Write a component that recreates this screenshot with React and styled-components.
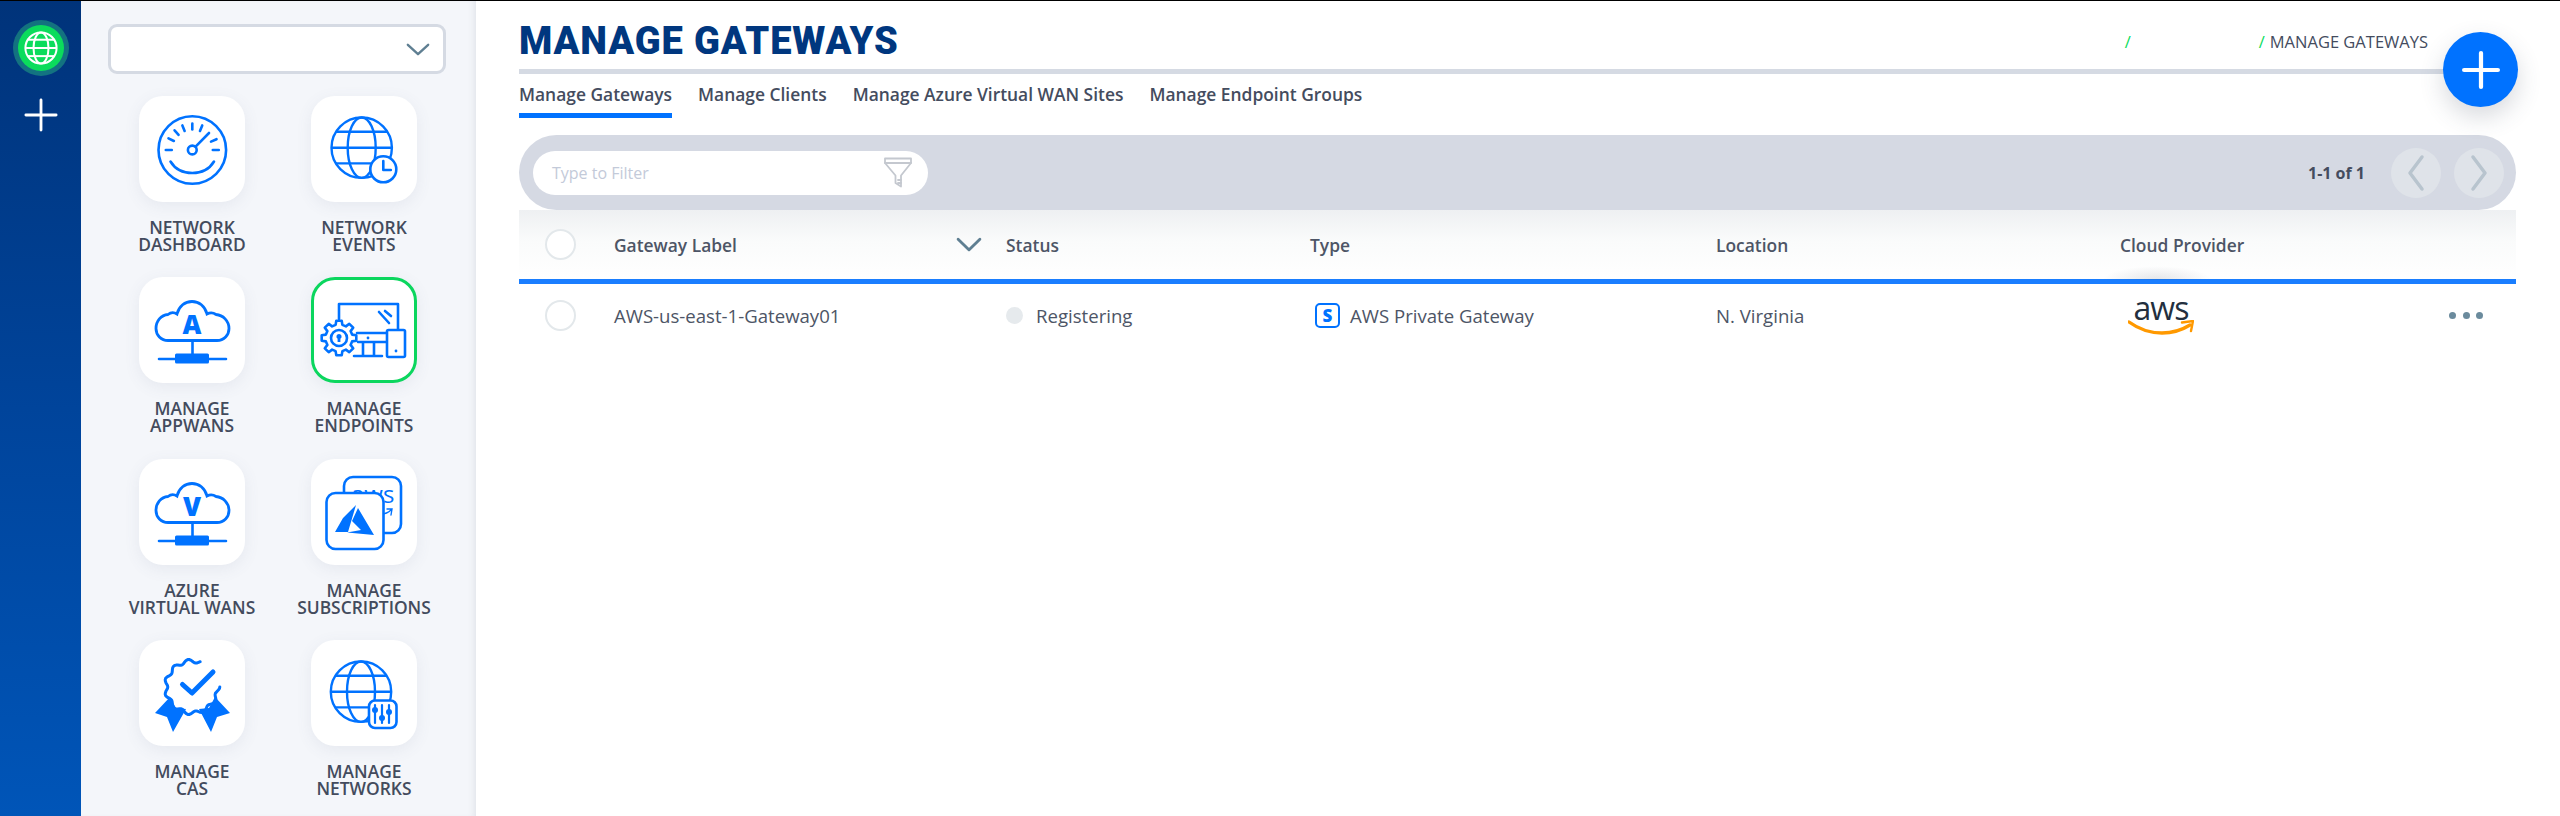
import React from "react";
import styled, { createGlobalStyle } from "styled-components";

const BLUE = "#0072ff";

const GlobalStyle = createGlobalStyle`
  html, body {
    margin: 0;
    padding: 0;
    height: 100%;
    background: #fff;
    overflow: hidden;
  }
  * {
    box-sizing: border-box;
  }
`;

const Page = styled.div`
  position: relative;
  display: flex;
  width: 2560px;
  height: 816px;
  border-top: 1px solid #000;
  font-family: "Open Sans", "Noto Sans", sans-serif;
  color: #444c5e;
`;

const Rail = styled.aside`
  flex: 0 0 81px;
  display: flex;
  flex-direction: column;
  align-items: center;
  padding-top: 19px;
  background: linear-gradient(180deg, #00337a 0%, #00449b 50%, #0055b8 100%);
`;

const RailGlobe = styled.div`
  width: 46px;
  height: 46px;
  margin: 5px 0 27px;
  border-radius: 50%;
  background: #0bdc5c;
  box-shadow: 0 0 0 5px rgba(46, 200, 130, 0.42);
  display: flex;
  align-items: center;
  justify-content: center;
`;

const Panel = styled.nav`
  flex: 0 0 395px;
  min-width: 0;
  padding: 23px 0 0 27px;
  background: #f4f6fa;
  box-shadow: inset -6px 0 8px -6px rgba(60, 70, 90, 0.14);
`;

const NetworkSelect = styled.div`
  width: 338px;
  height: 50px;
  border: 3px solid #d5dae3;
  border-radius: 9px;
  background: #fff;
  display: flex;
  align-items: center;
  justify-content: flex-end;
  padding-right: 13px;
`;

const TileGrid = styled.div`
  display: grid;
  grid-template-columns: 172px 172px;
  grid-auto-rows: 181.3px;
  margin: 22px 0 0 -2px;
`;

const TileItem = styled.div`
  display: flex;
  flex-direction: column;
  align-items: center;
`;

const TileBox = styled.div`
  width: 106px;
  height: 106px;
  border-radius: 24px;
  background: #fff;
  border: ${(p) => (p.$active ? "3px solid #0bd65e" : "none")};
  box-shadow: 0 4px 16px rgba(90, 100, 130, 0.09);
  display: flex;
  align-items: center;
  justify-content: center;
  flex: none;
`;

const TileLabel = styled.div`
  margin-top: 17px;
  font-size: 17.4px;
  font-weight: 600;
  line-height: 17px;
  text-align: center;
  white-space: pre-line;
  color: #434b5d;
`;

const Main = styled.main`
  flex: 1;
  min-width: 0;
  padding: 0 44px 0 43px;
`;

const TitleRow = styled.header`
  display: flex;
  align-items: flex-start;
  justify-content: space-between;
  border-bottom: 5px solid #d5dae3;
  height: 73px;
`;

const Title = styled.h1`
  margin: 20px 0 0;
  font-family: Roboto, "Liberation Sans", sans-serif;
  font-size: 38px;
  line-height: 40px;
  font-weight: 900;
  letter-spacing: 0.9px;
  color: #00377f;
`;

const Breadcrumbs = styled.div`
  display: flex;
  align-items: center;
  margin: 31px 88px 0 0;
  font-size: 16.5px;
  line-height: 20px;
  font-weight: 500;
  white-space: nowrap;
  color: #444c5e;
`;

const Slash = styled.span`
  color: #0bdc5c;
  font-weight: 400;
  margin-right: ${(p) => p.$gap}px;
`;

const Tabs = styled.div`
  display: flex;
  gap: 26px;
  height: 44px;
`;

const Tab = styled.div`
  height: 44px;
  padding-top: 9px;
  font-size: 17.4px;
  line-height: 22px;
  font-weight: 600;
  white-space: nowrap;
  color: #444c5e;
  border-bottom: 5px solid ${(p) => (p.$active ? BLUE : "transparent")};
`;

const FilterBar = styled.div`
  height: 75px;
  margin-top: 17px;
  padding: 0 12px 0 14px;
  border-radius: 38px;
  background: #d5d9e3;
  display: flex;
  align-items: center;
`;

const FilterInput = styled.div`
  width: 395px;
  height: 44px;
  padding: 0 15px 0 19px;
  border-radius: 22px;
  background: #fff;
  display: flex;
  align-items: center;
  justify-content: space-between;
  font-size: 16px;
  font-weight: 400;
  color: #c3cad9;
`;

const PageCount = styled.div`
  margin-left: auto;
  margin-right: 26px;
  font-size: 16px;
  font-weight: 700;
  color: #444c5e;
`;

const PageButton = styled.div`
  width: 50px;
  height: 50px;
  margin-left: ${(p) => p.$gap || 0}px;
  border-radius: 50%;
  background: #dfe3e9;
  display: flex;
  align-items: center;
  justify-content: center;
`;

const gridColumns = "95px 392px 304px 406px 404px 270px 1fr";

const HeadRow = styled.div`
  display: grid;
  grid-template-columns: ${gridColumns};
  align-items: center;
  height: 74px;
  border-bottom: 5px solid #1a7eff;
  background: linear-gradient(180deg, #eef0f2 0%, #fafbfb 45%, #fff 100%);
  font-size: 17.4px;
  font-weight: 600;
  color: #4d5566;
`;

const BodyRow = styled.div`
  display: grid;
  grid-template-columns: ${gridColumns};
  align-items: center;
  height: 63px;
  font-size: 18.6px;
  font-weight: 400;
  color: #4d5566;
`;

const RowCheck = styled.div`
  width: 31px;
  height: 31px;
  margin-left: 26px;
  border-radius: 50%;
  border: 2px solid #e3e8eb;
  background: #fff;
`;

const HeadLabel = styled.div`
  display: flex;
  align-items: center;
  justify-content: space-between;
  padding-right: 24px;
`;

const ProviderHead = styled.div`
  position: relative;
  white-space: nowrap;
  &::after {
    content: "";
    position: absolute;
    left: -18px;
    top: 33px;
    width: 110px;
    height: 14px;
    background: radial-gradient(ellipse at 50% 100%, rgba(60, 70, 90, 0.14), transparent 70%);
  }
`;

const StatusCell = styled.div`
  display: flex;
  align-items: center;
  gap: 13px;
`;

const StatusDot = styled.span`
  width: 17px;
  height: 17px;
  border-radius: 50%;
  background: #e6eaed;
`;

const TypeCell = styled.div`
  display: flex;
  align-items: center;
  gap: 10px;
  margin-left: 5px;
`;

const TypeBadge = styled.span`
  width: 25px;
  height: 25px;
  border: 2px solid ${BLUE};
  border-radius: 5px;
  display: flex;
  align-items: center;
  justify-content: center;
  font-size: 17px;
  line-height: 1;
  font-weight: 800;
  color: ${BLUE};
`;

const ProviderCell = styled.div`
  margin-left: 7px;
  display: flex;
  flex-direction: column;
  align-items: center;
  width: 68px;
`;

const AwsWord = styled.span`
  font-size: 32px;
  line-height: 24px;
  height: 24px;
  font-weight: 500;
  letter-spacing: -1px;
  color: #232f3e;
`;

const MoreDots = styled.div`
  display: flex;
  justify-content: flex-end;
  gap: 6.5px;
  padding-right: 33px;
`;

const MoreDot = styled.span`
  width: 7px;
  height: 7px;
  border-radius: 50%;
  background: #6b8b9d;
`;

const Fab = styled.div`
  position: absolute;
  top: 31px;
  right: 42px;
  width: 75px;
  height: 75px;
  border-radius: 50%;
  background: ${BLUE};
  box-shadow: 0 10px 24px rgba(60, 70, 90, 0.2);
  display: flex;
  align-items: center;
  justify-content: center;
`;

const Plus = ({ size, width }) => (
  <svg width={size} height={size} viewBox="0 0 36 36" fill="none" stroke="#fff" strokeWidth={width} strokeLinecap="round">
    <path d="M18 2v32M2 18h32" />
  </svg>
);

const Chevron = ({ color, width, height, stroke }) => (
  <svg width={width} height={height} viewBox="0 0 26 14" fill="none" stroke={color} strokeWidth={stroke} strokeLinecap="round" strokeLinejoin="round" preserveAspectRatio="none">
    <path d="M2 2l11 10L24 2" />
  </svg>
);

const PageArrow = ({ left }) => (
  <svg width="18" height="38" viewBox="0 0 18 38" fill="none" stroke="#b8c4ce" strokeWidth="3.5" strokeLinecap="round" strokeLinejoin="round">
    <path d={left ? "M15 3L3 19l12 16" : "M3 3l12 16L3 35"} />
  </svg>
);

// globe drawn in tile coordinates, latitude lines stop at the circle
const GlobeLines = ({ cx, cy, r, sw = 2.4, rx }) => {
  const offs = [-0.53, 0, 0.52];
  const ell = rx || r * 0.45;
  return (
    <g fill="none" stroke="currentColor" strokeWidth={sw}>
      <circle cx={cx} cy={cy} r={r} />
      <ellipse cx={cx} cy={cy} rx={ell} ry={r} />
      {offs.map((o) => {
        const y = cy + o * r;
        const half = Math.sqrt(1 - o * o) * r;
        return <path key={o} d={`M${cx - half} ${y}H${cx + half}`} />;
      })}
    </g>
  );
};

const Ico = styled.svg.attrs({ viewBox: "0 0 106 106", width: 106, height: 106 })`
  color: ${BLUE};
  flex: none;
  margin: ${(p) => (p.$inset ? "-3px" : "0")};
`;

const DashboardIcon = () => {
  const cx = 53.3;
  const cy = 54;
  const angles = [180, 206, 228, 248, 270, 292, 336, 360];
  return (
    <Ico>
      <g fill="none" stroke="currentColor" strokeWidth="2.6" strokeLinecap="round">
        <circle cx={cx} cy={cy} r="33.8" />
        {angles.map((a) => {
          const t = (a * Math.PI) / 180;
          return (
            <path
              key={a}
              d={`M${cx + 20.5 * Math.cos(t)} ${cy + 20.5 * Math.sin(t)}L${cx + 26.5 * Math.cos(t)} ${cy + 26.5 * Math.sin(t)}`}
            />
          );
        })}
        <circle cx={cx} cy={cy} r="4.4" />
        <path d="M56.6 50.7L70 37" />
        <path d="M31.5 65.5C36 73 44 77 53.3 77C62.5 77 70.5 73 75 65.5" />
      </g>
    </Ico>
  );
};

const EventsIcon = () => (
  <Ico>
    <GlobeLines cx={50.7} cy={51.7} r={30.2} rx={14} />
    <circle cx="72.3" cy="73.3" r="13" fill="#fff" stroke="currentColor" strokeWidth="2.6" />
    <path d="M72.3 65v9h7.5" fill="none" stroke="currentColor" strokeWidth="2.6" strokeLinecap="round" strokeLinejoin="round" />
  </Ico>
);

const CloudLetter = styled.text`
  font-family: "Open Sans", sans-serif;
  font-weight: 800;
  font-size: 26px;
  fill: currentColor;
  text-anchor: middle;
`;

const CloudIcon = ({ letter }) => (
  <Ico>
    <path
      d="M29 63.5H78C85 63.5 90 58 90 51.5C90 44 84 38 77 37.5C74 35.5 71 35.5 68 37C66 29 60 24.5 53 24.5C46 24.5 40 29 38 37C35 35 32 35 29 37.5C22 38 17 44 17 51.5C17 58 22 63.5 29 63.5Z"
      fill="none"
      stroke="currentColor"
      strokeWidth="2.8"
    />
    <path d="M53.5 64V77M20 82H87" fill="none" stroke="currentColor" strokeWidth="2.6" strokeLinecap="round" />
    <rect x="36" y="76.5" width="34" height="10" rx="1.5" fill="currentColor" />
    <CloudLetter x="53" y="57">{letter}</CloudLetter>
  </Ico>
);

const gearPath = (cx, cy, ro, ri, teeth) => {
  const pts = [];
  const step = (Math.PI * 2) / teeth;
  for (let i = 0; i < teeth; i++) {
    const a = i * step - Math.PI / 2;
    const w = step * 0.2;
    [
      [ri, a - step * 0.32],
      [ro, a - w],
      [ro, a + w],
      [ri, a + step * 0.32],
    ].forEach(([r, t]) => pts.push(`${(cx + r * Math.cos(t)).toFixed(1)} ${(cy + r * Math.sin(t)).toFixed(1)}`));
  }
  return `M${pts.join("L")}Z`;
};

const EndpointsIcon = () => (
  <Ico $inset>
    <g fill="none" stroke="currentColor" strokeWidth="2.6" strokeLinejoin="round" strokeLinecap="round">
      <path d="M28 42V27H87V53" />
      <path d="M68 35L78 46M74 34L80 39" />
      <path d="M47 65H76M46 56H76" />
      <path d="M52 66V79M63 66V79M43 79H71" />
      <rect x="76" y="53" width="18" height="27" rx="1.5" fill="#fff" />
      <path d={gearPath(28, 61, 17.5, 13.5, 8)} fill="#fff" />
      <circle cx="28" cy="61" r="8" />
    </g>
    <circle cx="57" cy="61" r="1.4" fill="currentColor" />
    <circle cx="85" cy="74" r="1.4" fill="currentColor" />
    <path d="M28 57a2.6 2.6 0 0 1 1.4 4.8V65h-2.8v-3.2A2.6 2.6 0 0 1 28 57Z" fill="currentColor" />
  </Ico>
);

const FaintAws = styled.text`
  font-family: "Open Sans", sans-serif;
  font-size: 24px;
  font-weight: 400;
  fill: currentColor;
`;

const SubscriptionsIcon = () => (
  <Ico>
    <rect x="33" y="18" width="57" height="56" rx="9" fill="none" stroke="currentColor" strokeWidth="2.6" />
    <FaintAws x="40" y="44">aws</FaintAws>
    <path d="M70 55c4 0 7-1 10-4M76 50l5 0-1 6" fill="none" stroke="currentColor" strokeWidth="1.4" strokeLinecap="round" />
    <rect x="15.5" y="34" width="57" height="56" rx="9" fill="#fff" stroke="currentColor" strokeWidth="2.6" />
    <path d="M45 46L32 59L24 73H37ZM47 49L41 62L50 71L36 73.5L63 76Z" fill="currentColor" />
  </Ico>
);

const rosette = (cx, cy, from, to) => {
  const pts = [];
  for (let d = from; d <= to; d += 3) {
    const t = (d * Math.PI) / 180;
    const r = 26 + 1.8 * Math.cos(t * 11);
    pts.push(`${(cx + r * Math.cos(t)).toFixed(1)} ${(cy + r * Math.sin(t)).toFixed(1)}`);
  }
  return `M${pts.join("L")}`;
};

const CasIcon = () => (
  <Ico>
    <path d={rosette(53, 47, 0, 290)} fill="none" stroke="currentColor" strokeWidth="3" strokeLinecap="round" strokeLinejoin="round" />
    <path d="M16 73L31 57L37 68L47 69L34 92L28 77Z" fill="currentColor" />
    <path d="M91 73L76 57L70 68L60 69L72 92L78 77Z" fill="currentColor" />
    <path d="M43.5 44.5L53 53L74 32" fill="none" stroke="currentColor" strokeWidth="5" strokeLinecap="round" strokeLinejoin="round" />
  </Ico>
);

const NetworksIcon = () => (
  <Ico>
    <GlobeLines cx={50} cy={51.7} r={30.2} rx={14} />
    <rect x="58" y="60.5" width="27.5" height="27.5" rx="6" fill="#fff" stroke="currentColor" strokeWidth="2.6" />
    <path d="M64 65V83M71 65V83M78 65V83" fill="none" stroke="currentColor" strokeWidth="2.2" strokeLinecap="round" />
    <circle cx="64" cy="70" r="3" fill="currentColor" />
    <circle cx="71" cy="78" r="3" fill="currentColor" />
    <circle cx="78" cy="72" r="3" fill="currentColor" />
  </Ico>
);

const FilterFunnel = () => (
  <svg width="30" height="31" viewBox="0 0 30 31" fill="none" stroke="#c4c8cf" strokeWidth="1.8" strokeLinejoin="round" strokeLinecap="round">
    <path d="M2 1.5H28V6L18 18.5V29.5L12.5 26V18.5L2 6Z" />
    <path d="M2 6H28M15 23h3M15 26h3" />
  </svg>
);

const tiles = [
  { label: "NETWORK\nDASHBOARD", icon: <DashboardIcon /> },
  { label: "NETWORK\nEVENTS", icon: <EventsIcon /> },
  { label: "MANAGE\nAPPWANS", icon: <CloudIcon letter="A" /> },
  { label: "MANAGE\nENDPOINTS", icon: <EndpointsIcon />, active: true },
  { label: "AZURE\nVIRTUAL WANS", icon: <CloudIcon letter="V" /> },
  { label: "MANAGE\nSUBSCRIPTIONS", icon: <SubscriptionsIcon /> },
  { label: "MANAGE\nCAS", icon: <CasIcon /> },
  { label: "MANAGE\nNETWORKS", icon: <NetworksIcon /> },
];

const tabs = ["Manage Gateways", "Manage Clients", "Manage Azure Virtual WAN Sites", "Manage Endpoint Groups"];

export default function App() {
  return (
    <Page>
      <GlobalStyle />
      <Rail>
        <RailGlobe>
          <svg width="34" height="34" viewBox="0 0 34 34" style={{ color: "#fff" }}>
            <GlobeLines cx={17} cy={17} r={15.6} sw={2} rx={7.5} />
          </svg>
        </RailGlobe>
        <Plus size={34} width={3} />
      </Rail>

      <Panel>
        <NetworkSelect>
          <Chevron color="#5f7f92" width={24} height={13} stroke={2.6} />
        </NetworkSelect>
        <TileGrid>
          {tiles.map((t) => (
            <TileItem key={t.label}>
              <TileBox $active={t.active}>{t.icon}</TileBox>
              <TileLabel>{t.label}</TileLabel>
            </TileItem>
          ))}
        </TileGrid>
      </Panel>

      <Main>
        <TitleRow>
          <Title>MANAGE GATEWAYS</Title>
          <Breadcrumbs>
            <Slash $gap={128}>/</Slash>
            <Slash $gap={5}>/</Slash>
            MANAGE GATEWAYS
          </Breadcrumbs>
        </TitleRow>

        <Tabs>
          {tabs.map((t, i) => (
            <Tab key={t} $active={i === 0}>{t}</Tab>
          ))}
        </Tabs>

        <FilterBar>
          <FilterInput>
            Type to Filter
            <FilterFunnel />
          </FilterInput>
          <PageCount>1-1 of 1</PageCount>
          <PageButton><PageArrow left /></PageButton>
          <PageButton $gap={13}><PageArrow /></PageButton>
        </FilterBar>

        <HeadRow>
          <RowCheck />
          <HeadLabel>
            Gateway Label
            <Chevron color="#5f7f92" width={26} height={15} stroke={2.6} />
          </HeadLabel>
          <div>Status</div>
          <div>Type</div>
          <div>Location</div>
          <ProviderHead>Cloud Provider</ProviderHead>
        </HeadRow>

        <BodyRow>
          <RowCheck />
          <div>AWS-us-east-1-Gateway01</div>
          <StatusCell>
            <StatusDot />
            Registering
          </StatusCell>
          <TypeCell>
            <TypeBadge>S</TypeBadge>
            AWS Private Gateway
          </TypeCell>
          <div>N. Virginia</div>
          <ProviderCell>
            <AwsWord>aws</AwsWord>
            <svg width="66" height="15" viewBox="0 0 66 15" fill="none">
              <path d="M1 2C12 10 24 13 34 13C44 13 54 10 62 5" stroke="#f90" strokeWidth="3.4" strokeLinecap="round" />
              <path d="M54 2.5L65 1L63 11" stroke="#f90" strokeWidth="2.4" strokeLinecap="round" strokeLinejoin="round" />
            </svg>
          </ProviderCell>
          <MoreDots>
            <MoreDot />
            <MoreDot />
            <MoreDot />
          </MoreDots>
        </BodyRow>
      </Main>

      <Fab>
        <Plus size={38} width={4} />
      </Fab>
    </Page>
  );
}
